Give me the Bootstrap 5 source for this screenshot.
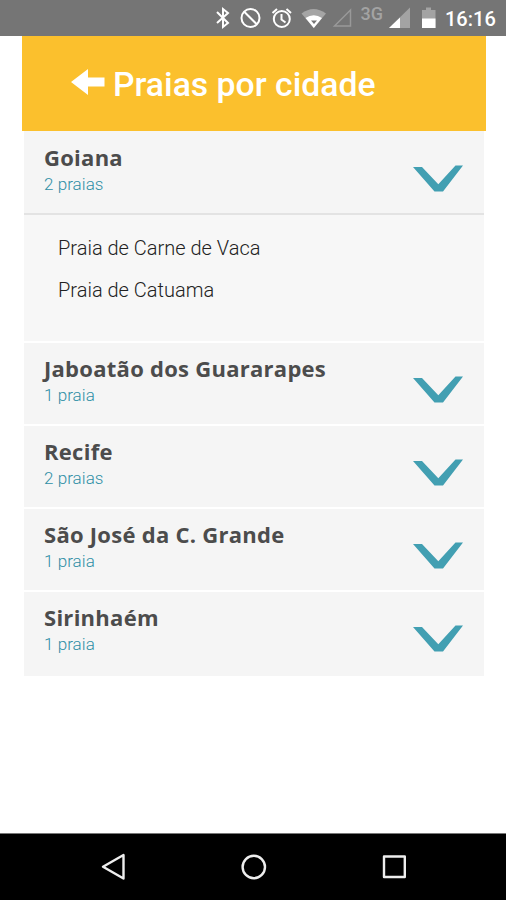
<!DOCTYPE html>
<html lang="pt-BR">
<head>
<meta charset="utf-8">
<meta name="viewport" content="width=device-width, initial-scale=1">
<title>Praias por cidade</title>
<link href="https://cdn.jsdelivr.net/npm/bootstrap@5.3.0/dist/css/bootstrap.min.css" rel="stylesheet">
<style>
body{font-family:Roboto,sans-serif;height:900px;overflow:hidden}
svg{display:block;flex:none}
.status-bar{height:36px;background:#757575}
.clock{font-size:20px;font-weight:500;line-height:38px;width:50px}
.app{margin:0 20px 0 22px}
.title-bar{height:95px;background:#fbc02d;padding-left:49px;gap:8px}
.title-bar svg{margin-bottom:3px}
.title-bar h1{font-size:33.75px;font-weight:500;line-height:40px;padding-top:2px;white-space:nowrap}
.cities{padding:0 2px;gap:2px}
.city{background:#f5f5f5;height:81px;padding:11px 21px 0 20px}
.city:last-child{height:84px}
.city h2{font-family:"Open Sans","Noto Sans",sans-serif;font-size:22px;font-weight:700;letter-spacing:.27px;line-height:28px;color:#4c4c4c;white-space:nowrap}
.count{font-size:17px;font-weight:300;letter-spacing:.05px;line-height:20px;color:#2f8fa5;margin-top:3px}
.city.open-city{height:82px;padding-top:12px}
.beaches{background:#f7f7f7;border-top:2px solid #e3e3e3;height:128px;padding:12px 34px;font-size:20px;font-weight:300;color:#222}
.beaches li{line-height:42px;height:42px}
.chev{margin-top:22px}
.nav-keys{height:67px;background:#000;border-top:1px solid #777}
</style>
</head>
<body class="bg-white d-flex flex-column">
<header class="status-bar d-flex text-white">
<svg width="445" height="36" viewBox="0 0 445 36" fill="none" stroke="#fff" stroke-width="2">
<path d="M217 12l11 11-5 4V9l5 4-11 10"/>
<circle cx="250.5" cy="18" r="9"/><path d="M244 11.5l13 13"/>
<circle cx="281.8" cy="19" r="8"/><path d="M281.5 14v5.5l4 3M272.500 13l4.500-4M291 13l-4.500-4"/>
<path d="M301.500 13.500Q313.500 4.500 326 13.500L313.800 28z" fill="#a5a5a5" stroke="none"/><path d="M305.500 18Q313.700 12.500 322 18L313.800 28z" fill="#fff" stroke="none"/><path d="M311 20.500h6l-3 3.500z" fill="#757575" stroke="none"/>
<path d="M334.500 26H350.500V10z" stroke="#999" stroke-width="1.500"/>
<text x="360.500" y="19.500" font-family="Roboto,sans-serif" font-size="18" font-weight="500" fill="#a3a3a3" stroke="none">3G</text>
<path d="M389 28h21V7.500z" fill="#a3a3a3" stroke="none"/><path d="M389 28h11V17.500z" fill="#fff" stroke="none"/>
<path d="M422 28V10h4V7.500h5V10h4.500v18z" fill="#a3a3a3" stroke="none"/><path d="M422 18.500h13.500V28H422z" fill="#fff" stroke="none"/>
</svg>
<span class="clock">16:16</span>
</header>
<main class="app flex-grow-1">
<div class="title-bar d-flex align-items-center text-white">
<svg width="34" height="26" viewBox="0 0 34 26"><path d="M0 13L17 0v8.500h16.500v9H17V26z" fill="#fff"/></svg>
<h1 class="mb-0">Praias por cidade</h1>
</div>
<div class="cities d-flex flex-column">
<section>
<div class="city open-city d-flex justify-content-between"><div><h2 class="mb-0">Goiana</h2><div class="count">2 praias</div></div><svg class="chev" width="50" height="27"><path d="M0 2H9L25.300 19.300L42.500 .5H50L30 26.500H21.500z" fill="#429fb2"/></svg></div>
<ul class="beaches list-unstyled mb-0"><li>Praia de Carne de Vaca</li><li>Praia de Catuama</li></ul>
</section>
<section class="city d-flex justify-content-between"><div><h2 class="mb-0">Jaboatão dos Guararapes</h2><div class="count">1 praia</div></div><svg class="chev" width="50" height="27"><path d="M0 2H9L25.300 19.300L42.500 .5H50L30 26.500H21.500z" fill="#429fb2"/></svg></section>
<section class="city d-flex justify-content-between"><div><h2 class="mb-0">Recife</h2><div class="count">2 praias</div></div><svg class="chev" width="50" height="27"><path d="M0 2H9L25.300 19.300L42.500 .5H50L30 26.500H21.500z" fill="#429fb2"/></svg></section>
<section class="city d-flex justify-content-between"><div><h2 class="mb-0">São José da C. Grande</h2><div class="count">1 praia</div></div><svg class="chev" width="50" height="27"><path d="M0 2H9L25.300 19.300L42.500 .5H50L30 26.500H21.500z" fill="#429fb2"/></svg></section>
<section class="city d-flex justify-content-between"><div><h2 class="mb-0">Sirinhaém</h2><div class="count">1 praia</div></div><svg class="chev" width="50" height="27"><path d="M0 2H9L25.300 19.300L42.500 .5H50L30 26.500H21.500z" fill="#429fb2"/></svg></section>
</div>
</main>
<footer class="nav-keys">
<svg width="506" height="66" viewBox="0 834 506 66" fill="none" stroke="#eee" stroke-width="2.400" stroke-linejoin="round"><path d="M103 866.700L123.500 855v23.500z"/><circle cx="253.800" cy="867" r="11.200"/><rect x="384" y="856.500" width="20.800" height="20.500"/></svg>
</footer>
<script src="https://cdn.jsdelivr.net/npm/bootstrap@5.3.0/dist/js/bootstrap.bundle.min.js"></script>
</body>
</html>
